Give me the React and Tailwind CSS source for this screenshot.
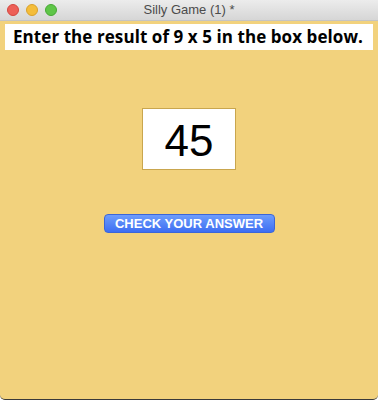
import React, { useState } from "react";

export default function App() {
  const [answer, setAnswer] = useState("45");

  return (
    <div className="w-[378px] h-[400px] flex flex-col bg-[#f2d27d] overflow-hidden rounded-b-[5px] border-b border-[#3a3a3a]">
      {/* title bar */}
      <div className="relative h-[21px] shrink-0 flex items-center justify-center bg-gradient-to-b from-[#ececec] to-[#d6d6d6] border-b border-[#c4c4c4]">
        <div className="absolute left-[7px] top-[4px] flex gap-[7px]">
          <span className="w-[12px] h-[12px] rounded-full bg-[#ed5f57] border border-[#d4463f]" />
          <span className="w-[12px] h-[12px] rounded-full bg-[#f4bd3a] border border-[#d9a12a]" />
          <span className="w-[12px] h-[12px] rounded-full bg-[#5fc648] border border-[#47a935]" />
        </div>
        <span className="text-[13px] text-[#4b4b4b] font-['Liberation_Sans',sans-serif]">Silly Game (1) *</span>
      </div>

      {/* content */}
      <div className="flex-1 flex flex-col items-center px-[5px] pt-[3px]">
        <div className="w-full h-[26px] bg-white flex items-center pl-[8px]">
          <span className="whitespace-nowrap text-[17px] font-bold text-black font-['Open_Sans',sans-serif] tracking-[0.07px]">
            Enter the result of 9 x 5 in the box below.
          </span>
        </div>

        <input
          value={answer}
          onChange={(e) => setAnswer(e.target.value)}
          className="mt-[58px] w-[94px] h-[62px] bg-white border border-[#c9a64e] text-center text-[44px] pt-[3px] text-black font-['Liberation_Sans',sans-serif] outline-none"
        />

        <button className="mt-[44px] w-[171px] h-[19px] rounded-[4px] bg-gradient-to-b from-[#6e9cfb] to-[#3e6ef2] border border-[#3b66d8] text-white text-[13px] font-bold leading-none font-['Liberation_Sans',sans-serif]">
          CHECK YOUR ANSWER
        </button>
      </div>
    </div>
  );
}
